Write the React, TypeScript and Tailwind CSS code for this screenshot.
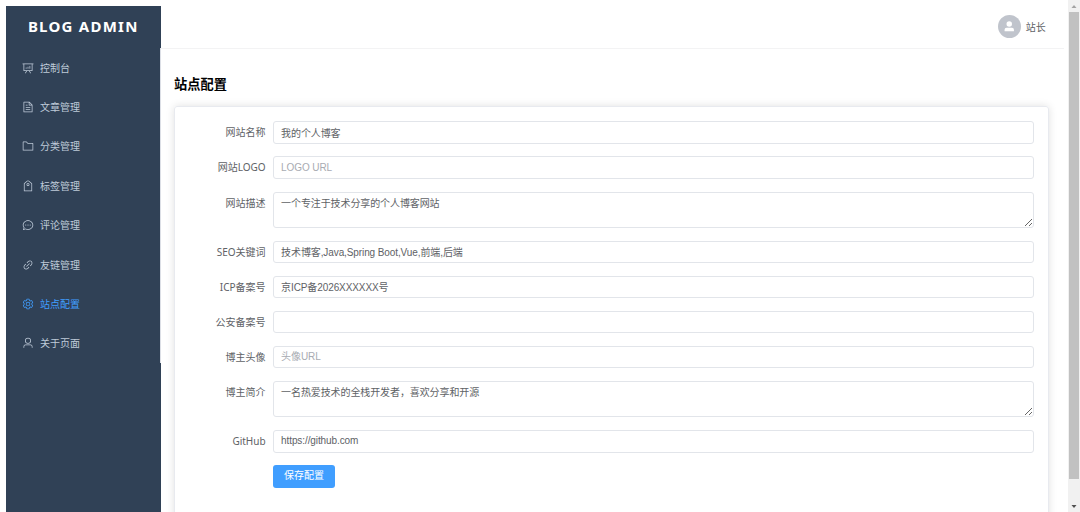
import type { ReactNode } from "react";

type IconProps = {
    d: string;
    className: string;
};

type FieldProps = {
    label: string;
    value?: string;
    placeholder?: string;
    area?: boolean;
};

const icons = {
    board: "m665.216 768 110.848 192h-73.856L591.36 768H433.024L322.176 960H248.32l110.848-192H160a32 32 0 0 1-32-32V192H64a32 32 0 0 1 0-64h896a32 32 0 1 1 0 64h-64v544a32 32 0 0 1-32 32zM832 192H192v512h640zM352 448a32 32 0 0 1 32 32v64a32 32 0 0 1-64 0v-64a32 32 0 0 1 32-32m160-64a32 32 0 0 1 32 32v128a32 32 0 0 1-64 0V416a32 32 0 0 1 32-32m160-64a32 32 0 0 1 32 32v192a32 32 0 1 1-64 0V352a32 32 0 0 1 32-32",
    document: "M832 384H576V128H192v768h640zm-26.496-64L640 154.496V320zM160 64h480l256 256v608a32 32 0 0 1-32 32H160a32 32 0 0 1-32-32V96a32 32 0 0 1 32-32m160 448h384v64H320zm0-192h160v64H320zm0 384h384v64H320z",
    folder: "M128 192v640h768V320H485.76L357.504 192zm-32-64h287.872l128.384 128H928a32 32 0 0 1 32 32v576a32 32 0 0 1-32 32H96a32 32 0 0 1-32-32V160a32 32 0 0 1 32-32",
    tag: "M224 318.336V896h576V318.336L552.512 115.84a64 64 0 0 0-81.024 0zM593.024 66.304l259.2 212.096A32 32 0 0 1 864 303.168V928a32 32 0 0 1-32 32H192a32 32 0 0 1-32-32V303.168a32 32 0 0 1 11.712-24.768l259.2-212.096a128 128 0 0 1 162.112 0M512 448a64 64 0 1 0 0-128 64 64 0 0 0 0 128m0 64a128 128 0 1 1 0-256 128 128 0 0 1 0 256",
    chat: "m174.72 855.68 135.296-45.12 23.68 11.84C388.096 849.536 448.576 864 512 864c211.84 0 384-166.784 384-352S723.84 160 512 160 128 326.784 128 512c0 69.12 24.96 139.264 70.848 199.232l22.08 28.8-46.272 115.584zm-45.248 82.56A32 32 0 0 1 89.6 896l58.368-145.92C94.72 680.32 64 596.864 64 512 64 299.904 256 96 512 96s448 203.904 448 416-192 416-448 416a461.06 461.06 0 0 1-206.912-48.384l-175.616 58.56zM512 563.2a51.2 51.2 0 1 1 0-102.4 51.2 51.2 0 0 1 0 102.4m192 0a51.2 51.2 0 1 1 0-102.4 51.2 51.2 0 0 1 0 102.4m-384 0a51.2 51.2 0 1 1 0-102.4 51.2 51.2 0 0 1 0 102.4",
    link: "M715.648 625.152 670.4 579.904l90.496-90.56c75.008-74.944 85.12-186.368 22.656-248.896-62.528-62.464-173.952-52.352-248.96 22.656L444.16 353.6l-45.248-45.248 90.496-90.496c100.032-99.968 251.968-110.08 339.456-22.656 87.488 87.488 77.312 239.424-22.656 339.456l-90.496 90.496zm-90.496 90.496-90.496 90.496C434.624 906.112 282.688 916.224 195.2 828.8c-87.488-87.488-77.312-239.424 22.656-339.456l90.496-90.496 45.248 45.248-90.496 90.56c-75.008 74.944-85.12 186.368-22.656 248.896 62.528 62.464 173.952 52.352 248.96-22.656l90.496-90.496zm0-362.048 45.248 45.248L398.848 670.4 353.6 625.152z",
    setting: "M600.704 64a32 32 0 0 1 30.464 22.208l35.2 109.376c14.784 7.232 28.928 15.36 42.432 24.512l112.384-24.192a32 32 0 0 1 34.432 15.36L944.32 364.8a32 32 0 0 1-4.032 37.504l-77.12 85.12a357.12 357.12 0 0 1 0 49.024l77.12 85.248a32 32 0 0 1 4.032 37.504l-88.704 153.6a32 32 0 0 1-34.432 15.296L708.8 803.904c-13.44 9.088-27.648 17.28-42.368 24.512l-35.264 109.376A32 32 0 0 1 600.704 960H423.296a32 32 0 0 1-30.464-22.208L357.696 828.48a351.616 351.616 0 0 1-42.56-24.64l-112.32 24.256a32 32 0 0 1-34.432-15.36L79.68 659.2a32 32 0 0 1 4.032-37.504l77.12-85.248a357.12 357.12 0 0 1 0-48.896l-77.12-85.248A32 32 0 0 1 79.68 364.8l88.704-153.6a32 32 0 0 1 34.432-15.296l112.32 24.256c13.568-9.152 27.776-17.408 42.56-24.64l35.2-109.312A32 32 0 0 1 423.232 64H600.64zm-23.424 64H446.72l-36.352 113.088-24.512 11.968a294.113 294.113 0 0 0-34.816 20.096l-22.656 15.36-116.224-25.088-65.28 113.152 79.68 88.192-1.92 27.136a293.12 293.12 0 0 0 0 40.192l1.92 27.136-79.808 88.192 65.344 113.152 116.224-25.024 22.656 15.296a294.113 294.113 0 0 0 34.816 20.096l24.512 11.968L446.72 896h130.688l36.48-113.152 24.448-11.904a288.282 288.282 0 0 0 34.752-20.096l22.592-15.296 116.288 25.024 65.28-113.152-79.744-88.192 1.92-27.136a293.12 293.12 0 0 0 0-40.256l-1.92-27.136 79.808-88.128-65.344-113.152-116.288 24.96-22.592-15.232a287.616 287.616 0 0 0-34.752-20.096l-24.448-11.904L577.344 128zM512 320a192 192 0 1 1 0 384 192 192 0 0 1 0-384m0 64a128 128 0 1 0 0 256 128 128 0 0 0 0-256",
    user: "M512 512a192 192 0 1 0 0-384 192 192 0 0 0 0 384m0 64a256 256 0 1 1 0-512 256 256 0 0 1 0 512m320 320v-96a96 96 0 0 0-96-96H288a96 96 0 0 0-96 96v96a32 32 0 1 1-64 0v-96a160 160 0 0 1 160-160h448a160 160 0 0 1 160 160v96a32 32 0 1 1-64 0",
    userFilled: "M288 320a224 224 0 1 0 448 0 224 224 0 1 0-448 0m544 608H160a32 32 0 0 1-32-32v-96a160 160 0 0 1 160-160h448a160 160 0 0 1 160 160v96a32 32 0 0 1-32 32z",
};

const menu = [
    { icon: icons.board, text: "控制台" },
    { icon: icons.document, text: "文章管理" },
    { icon: icons.folder, text: "分类管理" },
    { icon: icons.tag, text: "标签管理" },
    { icon: icons.chat, text: "评论管理" },
    { icon: icons.link, text: "友链管理" },
    { icon: icons.setting, text: "站点配置", active: true },
    { icon: icons.user, text: "关于页面" },
];

const fields: FieldProps[] = [
    { label: "网站名称", value: "我的个人博客" },
    { label: "网站LOGO", placeholder: "LOGO URL" },
    { label: "网站描述", value: "一个专注于技术分享的个人博客网站", area: true },
    { label: "SEO关键词", value: "技术博客,Java,Spring Boot,Vue,前端,后端" },
    { label: "ICP备案号", value: "京ICP备2026XXXXXX号" },
    { label: "公安备案号" },
    { label: "博主头像", placeholder: "头像URL" },
    { label: "博主简介", value: "一名热爱技术的全栈开发者，喜欢分享和开源", area: true },
    { label: "GitHub", value: "https://github.com" },
];

function Icon({ d, className }: IconProps) {
    return (
        <svg viewBox="0 0 1024 1024" fill="currentColor" className={className}>
            <path d={d} />
        </svg>
    );
}

function Row({ label, children }: { label?: string; children: ReactNode }) {
    return (
        <div className="mb-[12.5px] flex">
            <div className="w-[90.5px] shrink-0 text-right text-[10px] leading-[22.6px] text-[#606266]">
                {label}
            </div>
            <div className="ml-[7.5px] flex min-w-0 flex-1">{children}</div>
        </div>
    );
}

function Field({ label, value, placeholder, area }: FieldProps) {
    const box =
        "block w-full rounded-[3px] border border-[#e2e5ea] bg-white px-[7px] text-[10px] tracking-[-0.1px] text-[#606266] outline-none placeholder:text-[#a8abb2] font-['Liberation_Sans','Noto_Sans_CJK_SC',sans-serif]";

    return (
        <Row label={label}>
            {area ? (
                <textarea className={`${box} h-[36.5px] resize-y pt-[3px] leading-[15px]`} defaultValue={value} />
            ) : (
                <input className={`${box} h-[22.6px] pb-[1px]`} defaultValue={value} placeholder={placeholder} />
            )}
        </Row>
    );
}

export default function App() {
    return (
        <div className="flex h-[512px] w-[1080px] overflow-hidden bg-white pl-[6px] font-['Noto_Sans','Noto_Sans_CJK_SC',sans-serif]">
            {/* 侧边栏 */}
            <aside className="mt-[5.5px] w-[154.5px] shrink-0 bg-[#304156]">
                <div className="flex h-[42.5px] items-center justify-center pb-[1px] text-[15px] font-bold tracking-[1.25px] text-white">
                    BLOG ADMIN
                </div>
                <nav className="border-r border-[#dcdfe6]">
                    {menu.map((item) => (
                        <div
                            key={item.text}
                            className={`flex h-[39.4px] items-center gap-[6px] pl-4 text-[10px] ${item.active ? "text-[#409eff]" : "text-[#bfcbd9]"}`}
                        >
                            <Icon d={item.icon} className="size-[12px]" />
                            <span className="pt-px">{item.text}</span>
                        </div>
                    ))}
                </nav>
            </aside>

            <div className="flex min-w-0 flex-1 flex-col">
                {/* 顶部栏 */}
                <header className="mr-[4px] flex h-[49px] shrink-0 items-center justify-end gap-[5.2px] border-b border-[#f3f3f4] pt-[5px] pr-[18.2px]">
                    <div className="flex size-[22.6px] items-center justify-center rounded-full bg-[#c0c4cc] text-white">
                        <Icon d={icons.userFilled} className="size-[12.5px]" />
                    </div>
                    <span className="pt-px text-[10px] text-[#606266]">站长</span>
                </header>

                {/* 站点配置表单 */}
                <main className="pr-[19px] pl-[13.6px]">
                    <h2 className="mt-[25px] h-[32px] text-[13.2px] leading-[21px] font-bold text-black">站点配置</h2>
                    <div className="h-[420px] rounded-[3px] border border-[#e8eaef] pt-[14.4px] pr-[14px] shadow-[0_0_9px_rgba(0,0,0,0.12)]">
                        {fields.map((field) => (
                            <Field key={field.label} {...field} />
                        ))}
                        <Row>
                            <button className="h-[22.6px] w-[62px] rounded-[3px] bg-[#409eff] pb-[1px] text-[10px] text-white">
                                保存配置
                            </button>
                        </Row>
                    </div>
                </main>
            </div>

            {/* 滚动条 */}
            <div className="flex w-[12px] shrink-0 flex-col items-center bg-[#f1f1f1]">
                <svg viewBox="0 0 12 12" className="size-[12px]">
                    <path d="M6 5 8.5 8h-5z" fill="#a3a3a3" />
                </svg>
                <div className="h-[467px] w-[10px] bg-[#c1c1c1]" />
                <svg viewBox="0 0 12 12" className="mt-auto size-[12px]">
                    <path d="M6 8 3.5 5h5z" fill="#505050" />
                </svg>
            </div>
        </div>
    );
}
